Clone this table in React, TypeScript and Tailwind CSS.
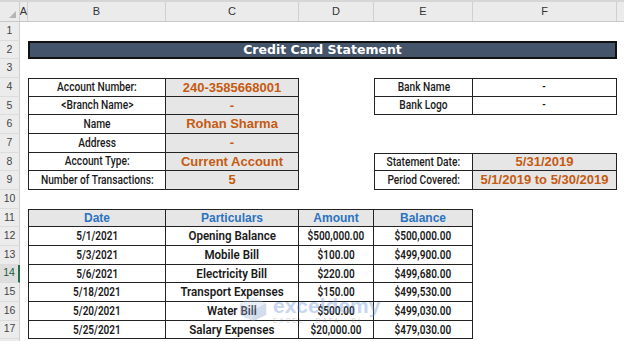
import React from "react";

const ROBOTO = "font-['Roboto','Liberation_Sans',sans-serif]";

type Col = "A" | "B" | "C" | "D" | "E" | "F" | "G";
const WIDTH: Record<Col, string> = {
  A: "w-[8px] shrink-0",
  B: "w-[138px] shrink-0",
  C: "w-[133px] shrink-0",
  D: "w-[75px] shrink-0",
  E: "w-[99px] shrink-0",
  F: "w-[144px] shrink-0",
  G: "flex-1",
};

function Cell({ col, className = "", children }: { col: Col; className?: string; children?: React.ReactNode }) {
  return (
    <div className={`${WIDTH[col]} h-full flex items-center justify-center whitespace-nowrap ${className}`}>
      {children}
    </div>
  );
}

function Row({ n, active = false, children }: { n?: number; active?: boolean; children?: React.ReactNode }) {
  return (
    <div className="flex h-[18.67px]">
      <div
        className={`w-[20px] shrink-0 h-full flex items-center justify-center text-[10.5px] font-['Liberation_Sans',Arial,sans-serif] border-b border-[#dcdcdc] ${
          active ? "bg-[#dedede] text-[#185c37] border-r-2 border-r-[#217346]" : "bg-[#ececec] text-[#444] border-r border-r-[#cfcfcf]"
        }`}
      >
        {n}
      </div>
      {children}
    </div>
  );
}

/* condensed text, drawn with Roboto narrowed horizontally */
function Lbl({ children }: { children: React.ReactNode }) {
  return <span className={`inline-block ${ROBOTO} font-medium text-[12px] text-[#1a1a1a] scale-x-[0.85]`}>{children}</span>;
}
function Word({ children }: { children: React.ReactNode }) {
  return <span className={`inline-block ${ROBOTO} font-semibold text-[13px] text-[#1a1a1a] scale-x-[0.89]`}>{children}</span>;
}
function Num({ children }: { children: React.ReactNode }) {
  return <span className={`inline-block ${ROBOTO} font-semibold text-[13px] text-[#1a1a1a] scale-x-[0.77]`}>{children}</span>;
}

const val = "font-['Liberation_Sans',Arial,sans-serif] font-bold text-[13px] text-[#c55a11] bg-[#e7e6e6]";
const head = "font-['Liberation_Sans',Arial,sans-serif] font-bold text-[12px] text-[#2b73c0] bg-[#e7e6e6]";
const bd = "border-[#222]";

const accountRows: [string, string][] = [
  ["Account Number:", "240-3585668001"],
  ["<Branch Name>", "-"],
  ["Name", "Rohan Sharma"],
  ["Address", "-"],
  ["Account Type:", "Current Account"],
  ["Number of Transactions:", "5"],
];

const tx: [string, string, string, string][] = [
  ["5/1/2021", "Opening Balance", "$500,000.00", "$500,000.00"],
  ["5/3/2021", "Mobile Bill", "$100.00", "$499,900.00"],
  ["5/6/2021", "Electricity Bill", "$220.00", "$499,680.00"],
  ["5/18/2021", "Transport Expenses", "$150.00", "$499,530.00"],
  ["5/20/2021", "Water Bill", "$500.00", "$499,030.00"],
  ["5/25/2021", "Salary Expenses", "$20,000.00", "$479,030.00"],
];

function ColHead({ col, text, last = false }: { col: Col; text: string; last?: boolean }) {
  return (
    <div
      className={`${WIDTH[col]} h-full flex items-center justify-center text-[11px] font-['Liberation_Sans',Arial,sans-serif] text-[#333] ${
        last ? "" : "border-r border-[#cfcfcf]"
      }`}
    >
      {text}
    </div>
  );
}

export default function App() {
  return (
    <div className="relative w-[624px] h-[341px] overflow-hidden bg-white">
      {/* column header */}
      <div className="flex flex-col h-[22px] bg-[#ebebeb] border-b border-[#c8c8c8]">
        <div className="h-[2px] bg-[#d6d6d6] shrink-0" />
        <div className="flex flex-1">
          <div className="w-[20px] shrink-0 h-full relative border-r border-[#cfcfcf]">
            <svg className="absolute right-[3px] bottom-[3px]" width="7" height="7" viewBox="0 0 7 7">
              <polygon points="7,0 7,7 0,7" fill="#b5b5b5" />
            </svg>
          </div>
          <ColHead col="A" text="A" />
          <ColHead col="B" text="B" />
          <ColHead col="C" text="C" />
          <ColHead col="D" text="D" />
          <ColHead col="E" text="E" />
          <ColHead col="F" text="F" />
          <ColHead col="G" text="" last />
        </div>
      </div>

      <Row n={1} />
      <Row n={2}>
        <Cell col="A" />
        <div className="w-[589px] shrink-0 h-full bg-[#44546a] border-2 border-[#111] flex items-center justify-center font-['DejaVu_Sans',sans-serif] font-bold text-[12.5px] text-white">
          Credit Card Statement
        </div>
      </Row>
      <Row n={3} />

      {accountRows.map(([l, v], i) => {
        const n = 4 + i;
        const top = i === 0 ? "border-t" : "";
        let right: React.ReactNode = (
          <>
            <Cell col="E" />
            <Cell col="F" />
          </>
        );
        if (n === 4 || n === 5) {
          right = (
            <>
              <Cell col="E" className={`border-l border-r border-b ${bd} ${n === 4 ? "border-t" : ""}`}>
                <Lbl>{n === 4 ? "Bank Name" : "Bank Logo"}</Lbl>
              </Cell>
              <Cell col="F" className={`border-r border-b ${bd} ${n === 4 ? "border-t" : ""}`}>
                <Lbl>-</Lbl>
              </Cell>
            </>
          );
        }
        if (n === 8 || n === 9) {
          right = (
            <>
              <Cell col="E" className={`border-l border-r border-b ${bd} ${n === 8 ? "border-t" : ""}`}>
                <Lbl>{n === 8 ? "Statement Date:" : "Period Covered:"}</Lbl>
              </Cell>
              <Cell col="F" className={`${val} border-r border-b ${bd} ${n === 8 ? "border-t" : ""}`}>
                {n === 8 ? "5/31/2019" : "5/1/2019 to 5/30/2019"}
              </Cell>
            </>
          );
        }
        return (
          <Row n={n} key={n}>
            <Cell col="A" />
            <Cell col="B" className={`border-l border-r border-b ${bd} ${top}`}>
              <Lbl>{l}</Lbl>
            </Cell>
            <Cell col="C" className={`${val} border-r border-b ${bd} ${top}`}>
              {v}
            </Cell>
            <Cell col="D" />
            {right}
          </Row>
        );
      })}

      <Row n={10} />
      <Row n={11}>
        <Cell col="A" />
        <Cell col="B" className={`${head} border-l border-t border-r border-b ${bd}`}>Date</Cell>
        <Cell col="C" className={`${head} border-t border-r border-b ${bd}`}>Particulars</Cell>
        <Cell col="D" className={`${head} border-t border-r border-b ${bd}`}>Amount</Cell>
        <Cell col="E" className={`${head} border-t border-r border-b ${bd}`}>Balance</Cell>
      </Row>
      {tx.map(([d, p, a, b], i) => (
        <Row n={12 + i} key={i} active={12 + i === 14}>
          <Cell col="A" />
          <Cell col="B" className={`border-l border-r border-b ${bd}`}><Num>{d}</Num></Cell>
          <Cell col="C" className={`border-r border-b ${bd}`}><Word>{p}</Word></Cell>
          <Cell col="D" className={`border-r border-b ${bd}`}><Num>{a}</Num></Cell>
          <Cell col="E" className={`border-r border-b ${bd}`}><Num>{b}</Num></Cell>
        </Row>
      ))}
      <Row />

      {/* watermark */}
      <div className="absolute left-[238px] top-[295px] flex items-start gap-[5px] opacity-35 pointer-events-none">
        <svg width="30" height="28" viewBox="0 0 32 28">
          <polygon points="16,1 30,8 30,20 16,27 2,20 2,8" fill="#9db3d6" />
          <polygon points="16,1 30,8 16,15 2,8" fill="#c3d2ea" />
          <polygon points="16,15 30,8 30,20 16,27" fill="#7f9cc9" />
        </svg>
        <div className="flex flex-col leading-none">
          <span className="font-['Liberation_Sans',Arial,sans-serif] font-bold text-[21px] text-[#5f8bd0] leading-[22px]">exceldemy</span>
          <span className="font-['Liberation_Sans',Arial,sans-serif] text-[6.5px] tracking-[2px] text-[#777] mt-[1px]">EXCEL · DATA · BI</span>
        </div>
      </div>
    </div>
  );
}
